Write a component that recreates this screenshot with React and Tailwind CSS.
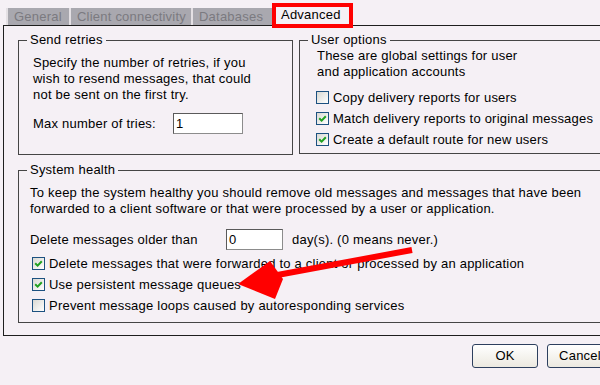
import React from 'react';

const FONT = "font-['Liberation_Sans',Arial,sans-serif]";

function CheckBox({ checked }) {
  return (
    <span className="w-[13px] h-[13px] shrink-0 border border-[#1c5180] bg-linear-to-br from-[#d9d9d3] to-white flex items-center justify-center">
      {checked && (
        <svg width="9" height="9" viewBox="0 0 9 9">
          <path d="M1.2 4.2 L3.6 6.6 L7.8 2.2" stroke="#21a121" strokeWidth="2" fill="none" />
        </svg>
      )}
    </span>
  );
}

function CheckRow({ checked, label, className = '' }) {
  return (
    <div className={`flex items-center gap-[4px] h-[21px] ${className}`}>
      <CheckBox checked={checked} />
      <span className="whitespace-nowrap">{label}</span>
    </div>
  );
}

function Group({ title, className = '', children }) {
  return (
    <fieldset className={`border border-[#454545] ${className}`}>
      <legend className="ml-[8px] px-[3px] leading-[16px]">{title}</legend>
      {children}
    </fieldset>
  );
}

function TextBox({ value, width }) {
  return (
    <div className={`h-[21px] ${width} bg-white border border-[#8c8c8c] border-t-[#5a5a5a] border-l-[#5a5a5a] px-[2px] leading-[19px]`}>
      {value}
    </div>
  );
}

const TABS = [
  { label: 'General', w: 'w-[63px]' },
  { label: 'Client connectivity', w: 'w-[122px]' },
  { label: 'Databases', w: 'w-[82px]' },
];

export default function App() {
  return (
    <div className={`relative w-[600px] h-[385px] overflow-hidden bg-[#f5f0f5] text-[13px] tracking-[0.22px] text-black ${FONT}`}>
      {/* Tabs */}
      <div className="flex h-[25px] pl-[6px] pt-[8px]">
        {TABS.map((t) => (
          <div key={t.label} className={`${t.w} h-[17px] bg-[#a9a8af] text-[#7b7a80] border-l-2 border-[#e4e0e4] pl-[6px] leading-[17px] whitespace-nowrap`}>
            {t.label}
          </div>
        ))}
        <div className="w-[79px] h-[21px] -mt-[4px] pl-[8px] leading-[22px] whitespace-nowrap">Advanced</div>
      </div>

      {/* Panel */}
      <div className="ml-[3px] w-[700px] h-[311px] border border-[#1e1e1e] pt-[6px] pl-[14px] flex flex-col gap-[7px]">
        <div className="flex gap-[6px]">
          <Group title="Send retries" className="w-[275px] h-[123px]">
            <div className="pl-[14px] mt-[7px] leading-[16px]">
              Specify the number of retries, if you<br />
              wish to resend messages, that could<br />
              not be sent on the first try.
            </div>
            <div className="flex items-center pl-[14px] mt-[10px]">
              <span className="w-[140px]">Max number of tries:</span>
              <TextBox value="1" width="w-[70px]" />
            </div>
          </Group>

          <Group title="User options" className="w-[320px] h-[122px]">
            <div className="pl-[17px] leading-[16px]">
              These are global settings for user<br />
              and application accounts
            </div>
            <div className="pl-[16px] mt-[7px] flex flex-col">
              <CheckRow checked={false} label="Copy delivery reports for users" />
              <CheckRow checked label="Match delivery reports to original messages" />
              <CheckRow checked label="Create a default route for new users" />
            </div>
          </Group>
        </div>

        <Group title="System health" className="w-[620px] h-[161px]">
          <div className="pl-[11px] mt-[7px] leading-[16px] whitespace-nowrap">
            To keep the system healthy you should remove old messages and messages that have been<br />
            forwarded to a client software or that were processed by a user or application.
          </div>
          <div className="flex items-center pl-[11px] mt-[12px]">
            <span className="w-[196px]">Delete messages older than</span>
            <TextBox value="0" width="w-[57px]" />
            <span className="ml-[9px] whitespace-nowrap">day(s). (0 means never.)</span>
          </div>
          <div className="pl-[13px] mt-[3px] flex flex-col">
            <CheckRow checked label="Delete messages that were forwarded to a client or processed by an application" />
            <CheckRow checked label="Use persistent message queues" />
            <CheckRow checked={false} label="Prevent message loops caused by autoresponding services" />
          </div>
        </Group>
      </div>

      {/* Buttons */}
      <div className="flex gap-[9px] pl-[472px] mt-[8px]">
        <button className="w-[66px] h-[24px] shrink-0 rounded-[3px] border border-[#2d3f5e] bg-linear-to-b from-white to-[#ece9e0]">OK</button>
        <button className="w-[66px] h-[24px] shrink-0 rounded-[3px] border border-[#2d3f5e] bg-linear-to-b from-white to-[#ece9e0]">Cancel</button>
      </div>

      {/* Highlight on Advanced tab */}
      <div className="absolute left-[272px] top-[3px] w-[81px] h-[25px] border-[4px] border-[#ff0000]" />

      {/* Red arrow */}
      <svg className="absolute inset-0 pointer-events-none" width="600" height="385" viewBox="0 0 600 385">
        <line x1="412" y1="250" x2="272" y2="276" stroke="#ff0000" strokeWidth="6" />
        <polygon points="238,284 270,261 283,279 275,299" fill="#ff0000" />
      </svg>
    </div>
  );
}
